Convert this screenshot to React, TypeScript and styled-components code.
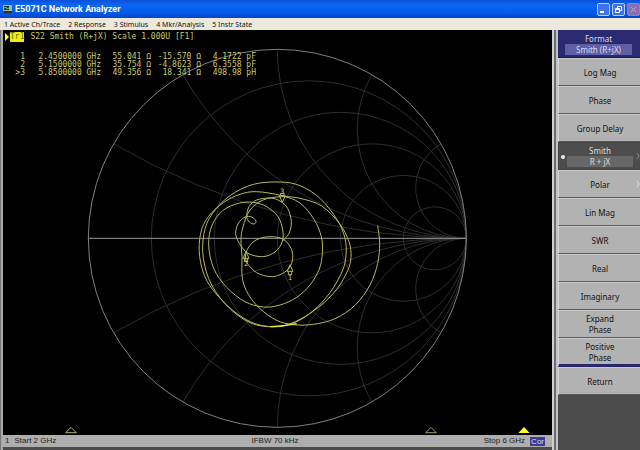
import React from "react";
import styled, { createGlobalStyle, css } from "styled-components";

const GlobalStyle = createGlobalStyle`
  * { box-sizing: border-box; }
  body { margin: 0; background: #4c4c4c; font-family: "Noto Sans", sans-serif; }
  button { font: inherit; border: 0; padding: 0; margin: 0; }
`;

const Window = styled.div`
  min-height: 100vh;
  display: flex;
  flex-direction: column;
`;

const TitleBar = styled.header`
  display: flex;
  align-items: center;
  height: 18px;
  padding: 0 0 0 3px;
  gap: 3px;
  color: #fff;
  background: linear-gradient(#0a50d8, #0b68f4 30%, #0559e8 70%, #0346c4);
`;

const Title = styled.h1`
  flex: 1;
  margin: 0;
  font: bold 9px/16px Roboto, sans-serif;
`;

const WindowButton = styled.button<{ $muted?: boolean }>`
  display: grid;
  place-items: center;
  width: 13px;
  height: 13px;
  border: 1px solid ${(p) => (p.$muted ? "#8585cf" : "#b9cdfa")};
  border-radius: 2px;
  background: ${(p) => (p.$muted ? "#8a6db4" : "#3f72e8")};
`;

const WindowButtons = styled.div`
  display: flex;
  gap: 2px;
`;

const MenuBar = styled.nav`
  display: flex;
  align-items: center;
  height: 12px;
  padding-left: 4px;
  gap: 8px;
  background: #ece9dc;
`;

const MenuItem = styled.button`
  background: none;
  color: #111;
  font-size: 7px;
  line-height: 11px;
`;

const Body = styled.main`
  flex: 1;
  display: flex;
  align-items: stretch;
`;

const Instrument = styled.section`
  flex: 1;
  min-width: 0;
  display: flex;
  flex-direction: column;
  padding: 0 0 3px 2px;
  border-left: 1px solid #777;
  background: linear-gradient(#aaa, #aaa) left / 2px 100% no-repeat, #4c4c4c;
`;

const Screen = styled.div`
  position: relative;
  flex: 1;
  min-height: 0;
  background: #000;
`;

const Chart = styled.svg`
  position: absolute;
  inset: 0;
  width: 100%;
  height: 100%;
`;

const Readout = styled.div`
  position: relative;
  color: #c9c96c;
  font: 8px/8px "DejaVu Sans Mono", monospace;
`;

const TraceLine = styled.div`
  display: flex;
  align-items: center;
  gap: 6px;
  padding: 2px 0 0 1px;
`;

const TraceHead = styled.div`
  display: flex;
  align-items: center;
  gap: 1px;
`;

const TraceTag = styled.span`
  padding: 1px 0;
  background: #eeee10;
  color: #6c6c00;
`;

const MarkerTable = styled.table`
  margin: 11px 0 0 11px;
  border-collapse: collapse;
  white-space: pre;

  td { padding: 0; text-align: right; height: 8px; }
  td:nth-child(1) { width: 11px; }
  td:nth-child(2) { width: 76px; }
  td:nth-child(3) { width: 50px; }
  td:nth-child(4) { width: 50px; }
  td:nth-child(5) { width: 55px; }
`;

const StatusBar = styled.footer`
  display: grid;
  grid-template-columns: 1fr auto 1fr;
  align-items: center;
  height: 12px;
  padding: 0 7px 0 2px;
  background: #aeaeae;
  color: #1c1c1c;
  font: 8px/12px "Liberation Sans", sans-serif;
`;

const StatusGroup = styled.div<{ $end?: boolean }>`
  display: flex;
  align-items: center;
  gap: 5px;
  justify-content: ${(p) => (p.$end ? "flex-end" : "flex-start")};
`;

const CorBadge = styled.span`
  padding: 0 1px;
  line-height: 9px;
  color: #d5d5f4;
  background: #3d3d96;
`;

const Rail = styled.div`
  width: 6px;
  background: linear-gradient(90deg, #d0d0d0 0 2px, #6c6c74 2px 4px, #c4c4c4 4px);
`;

const SideMenu = styled.aside`
  width: 82px;
  display: flex;
  flex-direction: column;
  background: #4c4c4c;
`;

const SideHeader = styled.div`
  height: 28px;
  padding: 3px 8px 0 7px;
  border-bottom: 1px solid #16163c;
  background: #2a2a70;
  color: #d8d8f0;
  font-size: 8px;
  line-height: 11px;
  text-align: center;
`;

const HeaderValue = styled.div`
  background: #5f5fa6;
`;

const SoftKey = styled.button<{ $active?: boolean; $ruled?: boolean }>`
  position: relative;
  height: ${(p) => (p.$ruled ? 29 : 28)}px;
  padding: 0 7px 0 8px;
  border-top: 1px solid #cacaca;
  border-left: 1px solid #d6d6d6;
  border-bottom: ${(p) => (p.$ruled ? "3px solid #28286e" : "1px solid #5a5f5c")};
  background: #b2b2b2;
  color: #111;
  font-size: 8px;
  line-height: 11px;
  white-space: pre-line;
  ${(p) =>
    p.$active &&
    css`
      border-color: #444;
      background: #4d4d4d;
      color: #ddd;
    `}
`;

const KeyValue = styled.span`
  display: block;
  background: #676767;
`;

const KeyDot = styled.span`
  position: absolute;
  left: 2px;
  top: 12px;
  width: 4px;
  height: 4px;
  border-radius: 50%;
  background: #eee;
`;

const KeyArrow = styled.svg<{ $dim?: boolean }>`
  position: absolute;
  right: 0;
  top: 9px;
  width: 4px;
  height: 8px;
  fill: none;
  stroke: ${(p) => (p.$dim ? "#858585" : "#dedede")};
`;

const CX = 592;
const CY = 595;
const R = 567;
const RESISTANCE = [0.2, 0.5, 1, 2, 5];
const REACTANCE = [15, 30, 45, 60, 75].map((deg) => Math.tan((deg * Math.PI) / 180));

type Point = [number, number];

const TRACE: Point[] = [
  [893, 557], [899, 610], [893, 670], [870, 735], [825, 796], [765, 836], [700, 853],
  [640, 854], [590, 841], [540, 806], [505, 763], [487, 715], [486, 650], [483, 600],
  [489, 560], [510, 510], [549, 480], [605, 470], [660, 475], [725, 498], [778, 550],
  [807, 605], [813, 650], [803, 692], [770, 748], [720, 798], [660, 838], [600, 859],
  [520, 852], [450, 806], [395, 735], [370, 655], [372, 580], [396, 522], [450, 467],
  [520, 433], [600, 426], [660, 437], [720, 475], [772, 540], [795, 595], [798, 645],
  [787, 693], [750, 758], [700, 812], [645, 847], [580, 860], [510, 845], [440, 795],
  [382, 725], [359, 650], [362, 580], [385, 530], [430, 488], [480, 463], [530, 455],
  [605, 467], [660, 489], [702, 538], [724, 590], [727, 640], [718, 687], [690, 735],
  [650, 772], [600, 795], [550, 801], [495, 785], [440, 742], [401, 685], [386, 615],
  [396, 556], [428, 512], [475, 490], [520, 487], [560, 500], [594, 530], [608, 570],
  [607, 605], [585, 636], [548, 650], [504, 640], [478, 610], [467, 580], [475, 550],
  [495, 531], [515, 531], [528, 543], [522, 552], [508, 546], [500, 530], [507, 500],
  [530, 480], [570, 474], [600, 483], [623, 505], [634, 545], [627, 580], [606, 604],
];

const MARKER_LOOP: Point[] = [
  [495, 658], [502, 628], [528, 600], [570, 590], [610, 598], [633, 625], [638, 655],
  [627, 685], [600, 704], [570, 710], [530, 698], [502, 670], [495, 645],
];

function smoothPath(points: Point[]) {
  let d = `M${points[0]}`;
  for (let i = 0; i < points.length - 1; i++) {
    const a = points[Math.max(i - 1, 0)];
    const b = points[i];
    const c = points[i + 1];
    const e = points[Math.min(i + 2, points.length - 1)];
    d += `C${b[0] + (c[0] - a[0]) / 6},${b[1] + (c[1] - a[1]) / 6} ${c[0] - (e[0] - b[0]) / 6},${c[1] - (e[1] - b[1]) / 6} ${c}`;
  }
  return d;
}

function SmithChart() {
  return (
    <Chart viewBox="-231 -30 1647 1215" role="img" aria-label="Smith chart of S22" fill="none">
      <g stroke="#2e2e2e" strokeWidth="3">
        {RESISTANCE.map((r) => (
          <circle key={r} cx={CX + (R * r) / (1 + r)} cy={CY} r={R / (1 + r)} />
        ))}
        {REACTANCE.map((x) => {
          const ex = CX + (R * (x * x - 1)) / (x * x + 1);
          const ey = (R * 2 * x) / (x * x + 1);
          return (
            <g key={x}>
              <path d={`M${CX + R},${CY}A${R / x},${R / x} 0 0 1 ${ex},${CY - ey}`} />
              <path d={`M${CX + R},${CY}A${R / x},${R / x} 0 0 0 ${ex},${CY + ey}`} />
            </g>
          );
        })}
      </g>
      <circle cx={CX} cy={CY} r={R} stroke="#808080" strokeWidth="3" />
      <path d={`M${CX - R},${CY}H${CX + R}`} stroke="#999" strokeWidth="3" />
      <g stroke="#b9b95c" strokeWidth="3">
        <path d={smoothPath(TRACE)} />
        <path d={smoothPath(MARKER_LOOP)} />
        <path d="M630 674l-9 20h18zM625 694v10h10v-10" />
        <path d="M498 635l-9 20h18zM493 655v10h10v-10" />
        <path d="M607 487l-9-20h18zM602 467v-7h10v7" />
      </g>
      <path d="M570 860Q610 860 650 851" stroke="#e6e620" strokeWidth="4" />
      <g fill="#c9c96c" fontFamily="DejaVu Sans Mono, monospace" fontSize="22" textAnchor="middle">
        <text x="630" y="719">1</text>
        <text x="499" y="678">2</text>
        <text x="607" y="462">3</text>
      </g>
      <g strokeWidth="3">
        <path d="M-27 1162l-16 16h32z" stroke="#b0b060" />
        <path d="M1053 1162l-16 16h32z" stroke="#999966" />
        <path d="M1332 1161l-17 18h34z" fill="#ffff20" />
      </g>
    </Chart>
  );
}

const MARKERS = [
  ["1", "2.4500000 GHz", "55.041 Ω", "-15.570 Ω", "4.1722 pF"],
  ["2", "5.1500000 GHz", "35.754 Ω", "-4.8623 Ω", "6.3558 pF"],
  [">3", "5.8500000 GHz", "49.356 Ω", "18.341 Ω", "498.98 pH"],
];

const MENUS = ["1 Active Ch/Trace", "2 Response", "3 Stimulus", "4 Mkr/Analysis", "5 Instr State"];

const KEYS: { label: string; value?: string; arrow?: boolean; ruled?: boolean }[] = [
  { label: "Log Mag" },
  { label: "Phase" },
  { label: "Group Delay" },
  { label: "Smith", value: "R + jX", arrow: true },
  { label: "Polar", arrow: true },
  { label: "Lin Mag" },
  { label: "SWR" },
  { label: "Real" },
  { label: "Imaginary" },
  { label: "Expand\nPhase" },
  { label: "Positive\nPhase", ruled: true },
  { label: "Return" },
];

export default function App() {
  return (
    <Window>
      <GlobalStyle />
      <TitleBar>
        <svg width="9" height="8" viewBox="0 0 9 8" aria-hidden="true">
          <path d="M0 0h9v6H0z" fill="#aab4aa" />
          <path d="M1 1h5v4H1z" fill="#123c24" />
          <path d="M1 6h8v2H1z" fill="#243044" />
          <path d="M1 3l2-1 1 2 2-1" stroke="#5fc878" fill="none" />
        </svg>
        <Title>E5071C Network Analyzer</Title>
        <WindowButtons>
          <WindowButton aria-label="Minimize">
            <svg width="9" height="9"><path d="M1 6h4v2H1z" fill="#fff" /></svg>
          </WindowButton>
          <WindowButton aria-label="Restore">
            <svg width="9" height="9" fill="none" stroke="#fff">
              <path d="M3.500 3V1.500h4v4H6M1.500 3.500h4v4h-4zM1.500 4.500h4" />
            </svg>
          </WindowButton>
          <WindowButton $muted aria-label="Close">
            <svg width="9" height="9" stroke="#b7a5d6"><path d="M2 2l5 5M7 2L2 7" /></svg>
          </WindowButton>
        </WindowButtons>
      </TitleBar>
      <MenuBar>
        {MENUS.map((m) => <MenuItem key={m}>{m}</MenuItem>)}
      </MenuBar>
      <Body>
        <Instrument>
          <Screen>
            <SmithChart />
            <Readout>
              <TraceLine>
                <TraceHead>
                  <svg width="5" height="8" aria-hidden="true"><path d="M1 0l4 4-4 4z" fill="#ffff20" /></svg>
                  <TraceTag>Tr1</TraceTag>
                </TraceHead>
                <span>S22 Smith (R+jX) Scale 1.000U [F1]</span>
              </TraceLine>
              <MarkerTable>
                <tbody>
                  {MARKERS.map((row) => (
                    <tr key={row[0]}>{row.map((c) => <td key={c}>{c}</td>)}</tr>
                  ))}
                </tbody>
              </MarkerTable>
            </Readout>
          </Screen>
          <StatusBar>
            <StatusGroup><span>1</span><span>Start 2 GHz</span></StatusGroup>
            <span>IFBW 70 kHz</span>
            <StatusGroup $end><span>Stop 6 GHz</span><CorBadge>Cor</CorBadge></StatusGroup>
          </StatusBar>
        </Instrument>
        <Rail />
        <SideMenu>
          <SideHeader>
            Format
            <HeaderValue>Smith (R+jX)</HeaderValue>
          </SideHeader>
          {KEYS.map((k) => (
            <SoftKey key={k.label} $active={!!k.value} $ruled={k.ruled}>
              {k.value && <KeyDot />}
              {k.label}
              {k.value && <KeyValue>{k.value}</KeyValue>}
              {k.arrow && (
                <KeyArrow $dim={!!k.value} viewBox="0 0 4 8"><path d="M1 1l2 3-2 3" /></KeyArrow>
              )}
            </SoftKey>
          ))}
        </SideMenu>
      </Body>
    </Window>
  );
}
